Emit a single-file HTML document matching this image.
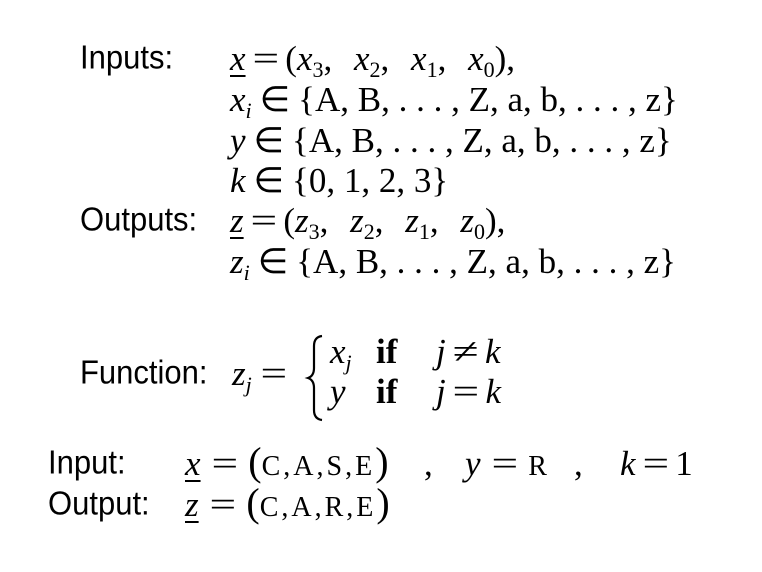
<!DOCTYPE html>
<html><head><meta charset="utf-8"><style>
body{margin:0;width:762px;height:572px;background:#fff;position:relative;overflow:hidden;color:#000}
.s{position:absolute;font-family:"Liberation Sans",sans-serif;font-size:31px;line-height:32px;white-space:nowrap;transform:scaleY(1.08);transform-origin:0 100%}
.m{position:absolute;font-family:"Liberation Serif",serif;font-size:35px;line-height:32px;white-space:nowrap}
i{font-style:italic}
sub{font-size:22px;vertical-align:-7px;line-height:0;font-style:normal}
.u{text-decoration:underline;text-decoration-thickness:2px;text-underline-offset:5px}
b{font-weight:bold}
.sc{font-size:28px;letter-spacing:3px}
.p{font-size:40px;line-height:0}
.o{display:inline-block;margin:0 10px;transform:scaleX(1.35)}
.c{margin-right:13px}
</style></head><body>
<div class="s" style="left:80px;top:43px">Inputs:</div>
<div class="m" style="left:230px;top:43px"><i class="u">x</i><span class="o">=</span>(<i>x</i><sub>3</sub>,<span class="c"></span> <i>x</i><sub>2</sub>,<span class="c"></span> <i>x</i><sub>1</sub>,<span class="c"></span> <i>x</i><sub>0</sub>),</div>
<div class="m" style="left:230px;top:84px"><i>x<sub><i>i</i></sub></i><span class="o" style="transform:none;margin:0 8px">∈</span>{A, B, . . . , Z, a, b, . . . , z}</div>
<div class="m" style="left:230px;top:125px"><i>y</i><span class="o" style="transform:none;margin:0 8px">∈</span>{A, B, . . . , Z, a, b, . . . , z}</div>
<div class="m" style="left:230px;top:165px"><i>k</i><span class="o" style="transform:none;margin:0 8px">∈</span>{0, 1, 2, 3}</div>
<div class="s" style="left:80px;top:205px">Outputs:</div>
<div class="m" style="left:230px;top:205px"><i class="u">z</i><span class="o">=</span>(<i>z</i><sub>3</sub>,<span class="c"></span> <i>z</i><sub>2</sub>,<span class="c"></span> <i>z</i><sub>1</sub>,<span class="c"></span> <i>z</i><sub>0</sub>),</div>
<div class="m" style="left:230px;top:246px"><i>z<sub><i>i</i></sub></i><span class="o" style="transform:none;margin:0 8px">∈</span>{A, B, . . . , Z, a, b, . . . , z}</div>

<div class="s" style="left:80px;top:358px">Function:</div>
<div class="m" style="left:232px;top:358px"><i>z<sub><i>j</i></sub></i><span class="o" style="margin:0 12px">=</span></div>
<svg style="position:absolute;left:302px;top:334px" width="24" height="88" viewBox="0 0 24 88"><path d="M20 2 Q12 3 12 12 L12 34 Q12 42 6 44 Q12 46 12 54 L12 76 Q12 85 20 86" fill="none" stroke="#000" stroke-width="2.2"/></svg>
<div class="m" style="left:330px;top:336px"><i>x<sub><i>j</i></sub></i></div>
<div class="m" style="left:376px;top:336px"><b>if</b></div>
<div class="m" style="left:436px;top:336px"><i>j</i><span class="o">≠</span><i>k</i></div>
<div class="m" style="left:330px;top:376px"><i>y</i></div>
<div class="m" style="left:376px;top:376px"><b>if</b></div>
<div class="m" style="left:436px;top:376px"><i>j</i><span class="o">=</span><i>k</i></div>

<div class="s" style="left:48px;top:448px">Input:</div>
<div class="m" style="left:185px;top:448px"><i class="u">x</i><span class="o" style="margin:0 14px">=</span><span class="p">(</span><span class="sc">C,A,S,E</span><span class="p">)</span></div>
<div class="m" style="left:424px;top:448px">,</div>
<div class="m" style="left:465px;top:448px"><i>y</i><span class="o" style="margin:0 14px">=</span><span class="sc">R</span></div>
<div class="m" style="left:574px;top:448px">,</div>
<div class="m" style="left:620px;top:448px"><i>k</i><span class="o">=</span>1</div>
<div class="s" style="left:48px;top:489px">Output:</div>
<div class="m" style="left:185px;top:489px"><i class="u">z</i><span class="o" style="margin:0 14px">=</span><span class="p">(</span><span class="sc">C,A,R,E</span><span class="p">)</span></div>
</body></html>
